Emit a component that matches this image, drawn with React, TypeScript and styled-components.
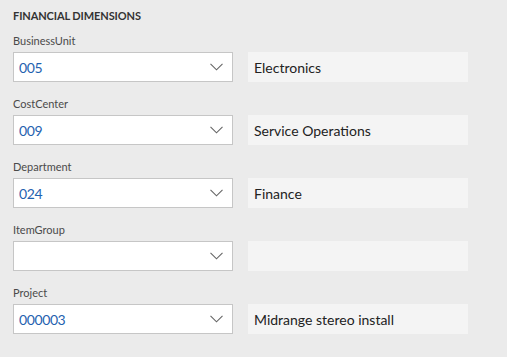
import React from "react";
import styled, { createGlobalStyle } from "styled-components";

const Global = createGlobalStyle`
	html, body {
		margin: 0;
		padding: 0;
		background: #ebebeb;
	}
	body {
		font-family: "Segoe UI", Lato, "Noto Sans", sans-serif;
	}
`;

const Panel = styled.div`
	display: flex;
	flex-direction: column;
	width: 507px;
	height: 357px;
	box-sizing: border-box;
	padding: 8px 13px 0 13px;
	background: #ebebeb;
`;

const Title = styled.h2`
	margin: 0 0 10px 0;
	font-size: 11px;
	line-height: 15px;
	font-weight: 700;
	color: #333333;
	text-transform: uppercase;
	letter-spacing: -0.1px;
`;

const Field = styled.div`
	display: flex;
	flex-direction: column;
	margin-bottom: 14px;
`;

const Label = styled.label`
	font-size: 11px;
	line-height: 16px;
	color: #4a4a4a;
	margin-bottom: 3px;
`;

const Row = styled.div`
	display: flex;
	gap: 15px;
	height: 30px;
`;

const Combo = styled.div`
	display: flex;
	align-items: center;
	width: 220px;
	box-sizing: border-box;
	border: 1px solid #c6c6c6;
	background: #ffffff;
	padding: 0 0 0 5px;
`;

const Value = styled.span`
	flex: 1;
	font-size: 14px;
	letter-spacing: -0.4px;
	color: #1f62b0;
`;

const Chevron = styled.span`
	display: flex;
	align-items: center;
	justify-content: center;
	width: 32px;
	height: 100%;
	color: #666666;
`;

const Description = styled.div`
	display: flex;
	align-items: center;
	width: 220px;
	box-sizing: border-box;
	padding: 0 6px;
	background: #f4f4f4;
	font-size: 14px;
	color: #222222;
`;

type Dimension = { name: string; value: string; text: string };

const dimensions: Dimension[] = [
	{ name: "BusinessUnit", value: "005", text: "Electronics" },
	{ name: "CostCenter", value: "009", text: "Service Operations" },
	{ name: "Department", value: "024", text: "Finance" },
	{ name: "ItemGroup", value: "", text: "" },
	{ name: "Project", value: "000003", text: "Midrange stereo install" },
];

const ChevronIcon = () => (
	<svg width="13" height="8" viewBox="0 0 13 8">
		<path d="M0.5 0.8 L6.5 6.8 L12.5 0.8" fill="none" stroke="currentColor" strokeWidth="1.1" />
	</svg>
);

export default function App() {
	return (
		<>
			<Global />
			<Panel>
				<Title>{ "Financial dimensions" }</Title>
				{ dimensions.map((d) => (
					<Field key={ d.name }>
						<Label>{ d.name }</Label>
						<Row>
							<Combo>
								<Value>{ d.value }</Value>
								<Chevron><ChevronIcon /></Chevron>
							</Combo>
							<Description>{ d.text }</Description>
						</Row>
					</Field>
				)) }
			</Panel>
		</>
	);
}
